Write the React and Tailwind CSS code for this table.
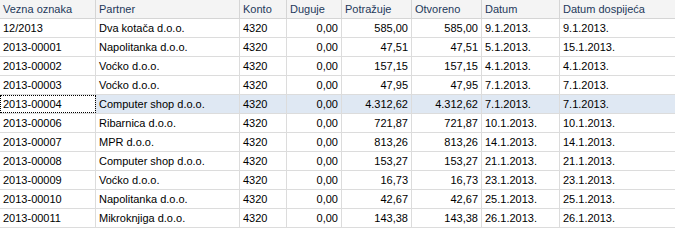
import React from 'react'

const columns = [
  { key: 'ref', label: 'Vezna oznaka', w: 'w-[96px]', align: 'left' },
  { key: 'partner', label: 'Partner', w: 'w-[144px]', align: 'left' },
  { key: 'konto', label: 'Konto', w: 'w-[47px]', align: 'left' },
  { key: 'duguje', label: 'Duguje', w: 'w-[55px]', align: 'right' },
  { key: 'potrazuje', label: 'Potražuje', w: 'w-[70px]', align: 'right' },
  { key: 'otvoreno', label: 'Otvoreno', w: 'w-[70px]', align: 'right' },
  { key: 'datum', label: 'Datum', w: 'w-[78px]', align: 'left' },
  { key: 'dospijece', label: 'Datum dospijeća', w: 'flex-1', align: 'left', last: true },
]

const rows = [
  ['12/2013', 'Dva kotača d.o.o.', '4320', '0,00', '585,00', '585,00', '9.1.2013.', '9.1.2013.'],
  ['2013-00001', 'Napolitanka d.o.o.', '4320', '0,00', '47,51', '47,51', '5.1.2013.', '15.1.2013.'],
  ['2013-00002', 'Voćko d.o.o.', '4320', '0,00', '157,15', '157,15', '4.1.2013.', '4.1.2013.'],
  ['2013-00003', 'Voćko d.o.o.', '4320', '0,00', '47,95', '47,95', '7.1.2013.', '7.1.2013.'],
  ['2013-00004', 'Computer shop d.o.o.', '4320', '0,00', '4.312,62', '4.312,62', '7.1.2013.', '7.1.2013.'],
  ['2013-00006', 'Ribarnica d.o.o.', '4320', '0,00', '721,87', '721,87', '10.1.2013.', '10.1.2013.'],
  ['2013-00007', 'MPR d.o.o.', '4320', '0,00', '813,26', '813,26', '14.1.2013.', '14.1.2013.'],
  ['2013-00008', 'Computer shop d.o.o.', '4320', '0,00', '153,27', '153,27', '21.1.2013.', '21.1.2013.'],
  ['2013-00009', 'Voćko d.o.o.', '4320', '0,00', '16,73', '16,73', '23.1.2013.', '23.1.2013.'],
  ['2013-00010', 'Napolitanka d.o.o.', '4320', '0,00', '42,67', '42,67', '25.1.2013.', '25.1.2013.'],
  ['2013-00011', 'Mikroknjiga d.o.o.', '4320', '0,00', '143,38', '143,38', '26.1.2013.', '26.1.2013.'],
]

const selected = 4

export default function App() {
  return (
    <div className="w-[675px] h-[248px] bg-white overflow-hidden text-[11px] leading-none" style={{ fontFamily: '"Liberation Sans", Arial, sans-serif' }}>
      {/* Header */}
      <div className="flex h-[19px] bg-[#f4f4f4] border-b border-[#d5d5d5] text-[#1e395b]">
        {columns.map((c) => (
          <div
            key={c.key}
            className={`${c.w} shrink-0 flex items-center pl-[3px] ${c.last ? '' : 'border-r border-[#d5d5d5]'}`}
          >
            {c.label}
          </div>
        ))}
      </div>

      {/* Rows */}
      {rows.map((r, i) => (
        <div
          key={i}
          className={`flex h-[19px] border-b border-[#dcdcdc] text-black ${i === selected ? 'bg-[#dfe8f3]' : 'bg-white'}`}
        >
          {columns.map((c, j) => {
            const focus = i === selected && j === 0
            return (
              <div
                key={c.key}
                className={`${c.w} shrink-0 flex items-center ${c.align === 'right' ? 'justify-end pr-[3px]' : 'pl-[3px]'} ${c.last ? '' : 'border-r border-[#dcdcdc]'} ${focus ? 'bg-white outline outline-1 outline-dotted outline-black -outline-offset-1' : ''}`}
              >
                {r[j]}
              </div>
            )
          })}
        </div>
      ))}
    </div>
  )
}
